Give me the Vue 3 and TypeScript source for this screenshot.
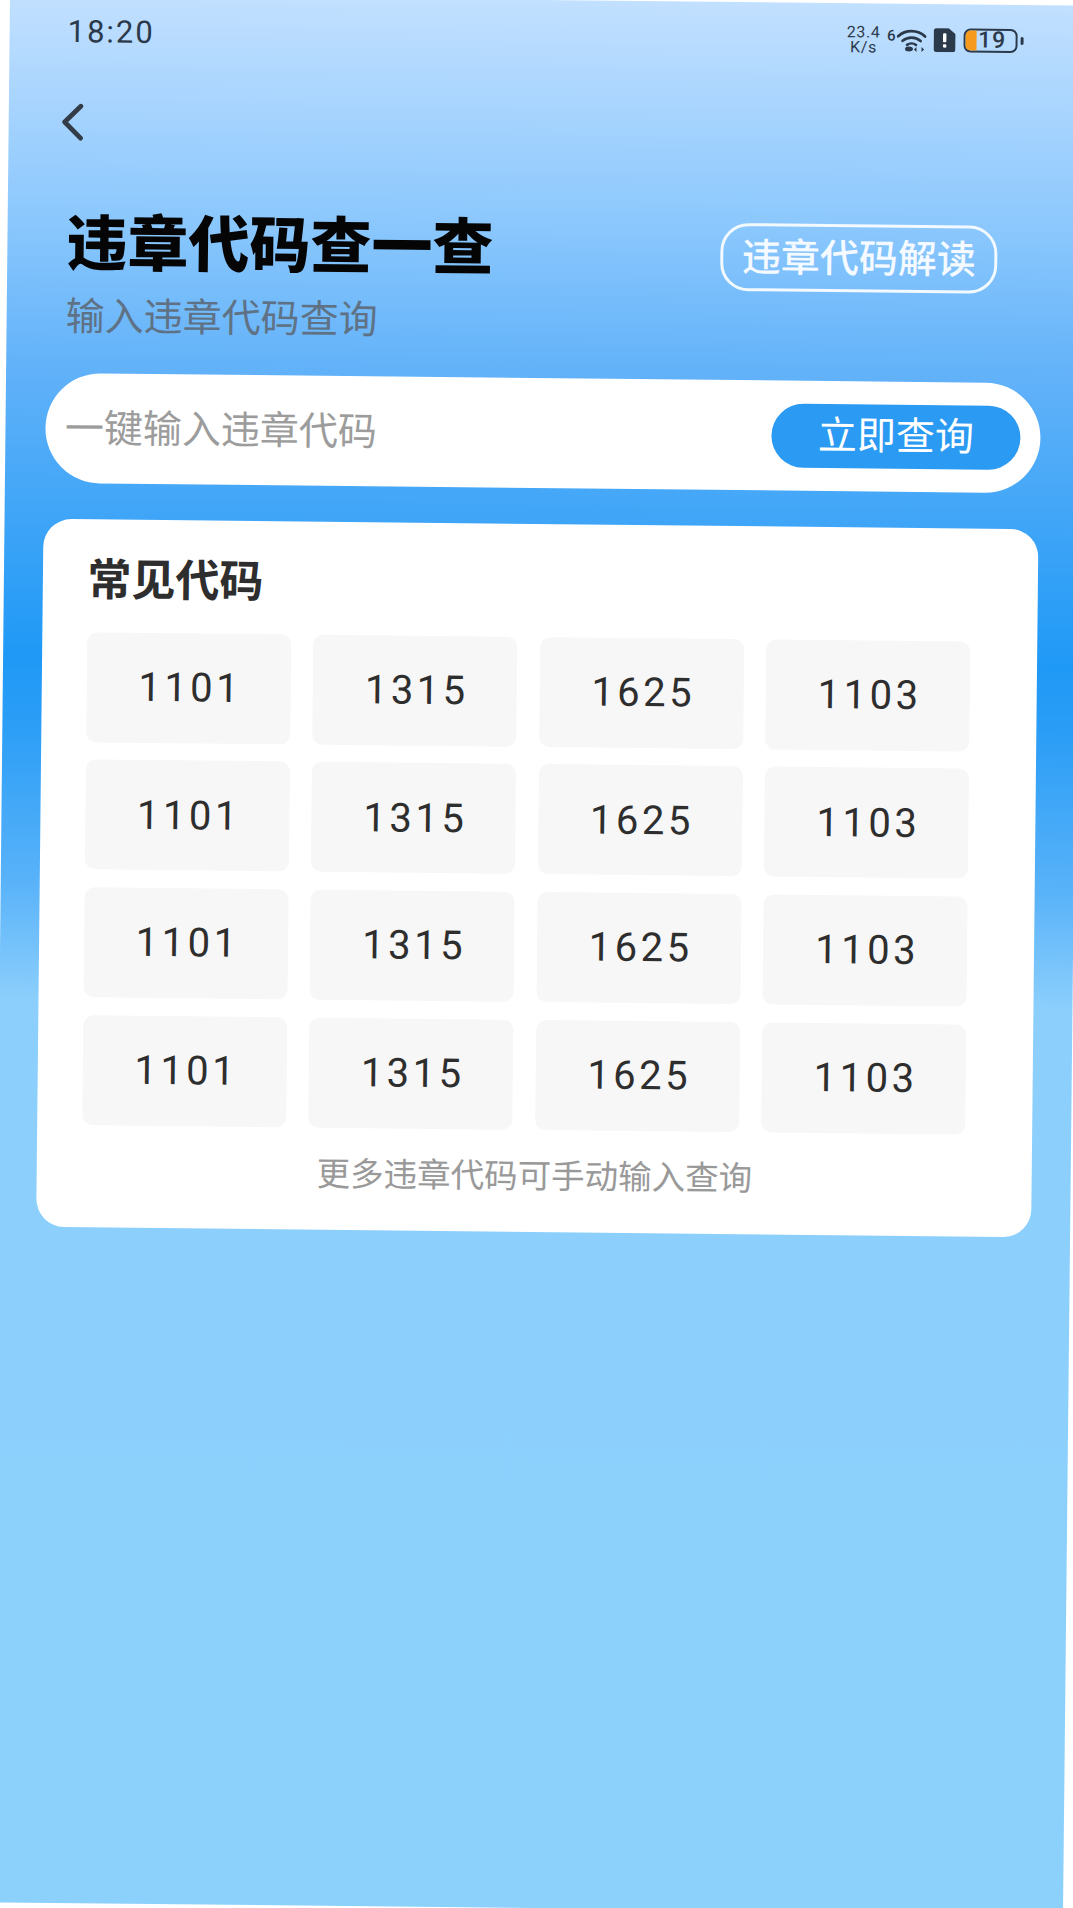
<script setup lang="ts">
const rows: string[][] = Array.from({ length: 4 }, () => ['1101', '1315', '1625', '1103'])
</script>

<template>
  <div class="page">
    <div class="status">
      <span class="time">18:20</span>
      <div class="status-right">
        <div class="speed">23.4<br />K/s</div>
        <span class="six">6</span>
        <svg class="wifi" viewBox="0 0 30 24" width="30" height="24" aria-hidden="true">
          <path d="M1.5 8.5C9 1.5 21 1.5 28.5 8.5" fill="none" stroke="#2b3a4b" stroke-width="2.8" stroke-linecap="round" />
          <path d="M6 13C11 8.6 19 8.6 24 13" fill="none" stroke="#2b3a4b" stroke-width="2.8" stroke-linecap="round" />
          <path d="M10.5 17C13 15.2 17 15.2 19.5 17" fill="none" stroke="#2b3a4b" stroke-width="2.6" stroke-linecap="round" />
          <ellipse cx="12.5" cy="21.2" rx="4" ry="2.5" fill="#2b3a4b" />
          <path d="M20 19v5l-2.6-2.5zM25 19v5l2.6-2.5z" fill="#2b3a4b" />
        </svg>
        <svg class="sim" viewBox="0 0 22 24" width="22" height="24" aria-hidden="true">
          <path d="M3 0H15L22 6V21a3 3 0 0 1-3 3H3a3 3 0 0 1-3-3V3a3 3 0 0 1 3-3z" fill="#2b3a4b" />
          <rect x="9.4" y="5" width="3.4" height="9" rx="1" fill="#fff" />
          <rect x="9.4" y="16" width="3.4" height="3.4" rx="1" fill="#fff" />
        </svg>
        <div class="battery">
          <span class="battery-fill"></span>
          <span class="battery-num">19</span>
        </div>
        <span class="nub"></span>
      </div>
    </div>

    <div class="nav">
      <svg class="back" viewBox="0 0 24 38" width="24" height="38" aria-hidden="true">
        <path d="M20 3L4 19L20 35" fill="none" stroke="#333d47" stroke-width="4.8" stroke-linecap="round" stroke-linejoin="round" />
      </svg>
    </div>

    <div class="header">
      <div class="heading">
        <h1 class="title">违章代码查一查</h1>
        <p class="subtitle">输入违章代码查询</p>
      </div>
      <button class="explain">违章代码解读</button>
    </div>

    <div class="search">
      <span class="placeholder">一键输入违章代码</span>
      <button class="query">立即查询</button>
    </div>

    <section class="card">
      <h2 class="card-title">常见代码</h2>
      <div class="grid">
        <template v-for="(row, r) in rows" :key="r">
          <div v-for="code in row" :key="code" class="tile">{{ code }}</div>
        </template>
      </div>
      <p class="more">更多违章代码可手动输入查询</p>
    </section>
  </div>
</template>

<style>
html, body {
  margin: 0;
  background: #fff;
  overflow: hidden;
}
</style>

<style scoped>
.page {
  width: 1073px;
  height: 1908px;
  box-sizing: border-box;
  transform: rotate(0.6deg);
  transform-origin: center;
  font-family: "Noto Sans CJK SC", "Noto Sans", sans-serif;
  background: linear-gradient(180deg, #c2e0ff 0, #8cc8fd 220px, #62b2f9 370px, #1f99f6 660px, #2a9df6 725px, #5ab3f9 890px, #8ccffc 1005px, #8cd0fc 100%);
  overflow: hidden;
}
.status {
  height: 72px;
  box-sizing: border-box;
  padding: 0 59px 0 58px;
  display: flex;
  align-items: center;
  justify-content: space-between;
}
.time {
  font-family: Roboto, sans-serif;
  font-size: 31px;
  letter-spacing: 2px;
  color: #2b3a4b;
}
.status-right {
  display: flex;
  align-items: center;
  color: #2b3a4b;
  font-family: Roboto, sans-serif;
}
.speed {
  width: 37px;
  text-align: center;
  font-size: 16px;
  line-height: 15px;
  letter-spacing: 0.6px;
}
.six {
  font-size: 15px;
  font-weight: 500;
  margin: -8px 1px 0 5px;
}
.wifi {
  margin-right: 7px;
}
.sim {
  margin-right: 8px;
}
.battery {
  position: relative;
  width: 54px;
  height: 24px;
  box-sizing: border-box;
  border: 2px solid #2b3a4b;
  border-radius: 7px;
  display: flex;
  align-items: center;
  justify-content: center;
}
.battery-fill {
  position: absolute;
  left: 0;
  top: 0;
  bottom: 0;
  width: 11px;
  border-radius: 5px 0 0 5px;
  background: #f59a1c;
}
.battery-num {
  position: relative;
  font-size: 23px;
  font-weight: 500;
  line-height: 20px;
  margin-left: 3px;
  letter-spacing: 1px;
}
.nub {
  width: 3px;
  height: 8px;
  border-radius: 2px;
  background: #2b3a4b;
  margin-left: 3px;
}
.nav {
  height: 110px;
  box-sizing: border-box;
  padding-left: 52px;
  display: flex;
  align-items: center;
}
.header {
  padding: 19.5px 83px 0 59px;
  display: flex;
  justify-content: space-between;
  align-items: flex-start;
}
.title {
  margin: 0;
  font-size: 61px;
  line-height: 84px;
  font-weight: 900;
  color: #050505;
}
.subtitle {
  margin: 2px 0 0;
  font-size: 39px;
  line-height: 60px;
  color: #5f7285;
}
.explain {
  margin-top: 19.5px;
  width: 277px;
  height: 68px;
  box-sizing: border-box;
  border: 3px solid #f2f9ff;
  border-radius: 28px;
  background: transparent;
  color: #f4faff;
  font-family: inherit;
  font-size: 39px;
  font-weight: 500;
  line-height: 1;
  padding: 0 0 6px;
  white-space: nowrap;
}
.search {
  margin: 30.5px 38px 0 39.5px;
  height: 110px;
  box-sizing: border-box;
  border-radius: 55px;
  background: #fff;
  padding: 0 20px;
  display: flex;
  align-items: center;
  justify-content: space-between;
}
.placeholder {
  font-size: 39px;
  color: #9c9c9c;
  padding-bottom: 7px;
}
.query {
  width: 249px;
  height: 64px;
  box-sizing: border-box;
  border: 0;
  border-radius: 32px;
  background: #2b9af2;
  color: #fff;
  font-family: inherit;
  font-size: 39px;
  line-height: 1;
  padding: 0 0 7px;
}
.card {
  margin: 36px 39px 0;
  box-sizing: border-box;
  border-radius: 28px;
  background: #fff;
  padding: 27px 67px 33px 44.5px;
}
.card-title {
  margin: 0;
  font-size: 44px;
  line-height: 60px;
  font-weight: 700;
  color: #2e2e2e;
}
.grid {
  margin-top: 25.6px;
  display: grid;
  grid-template-columns: repeat(4, 204px);
  grid-auto-rows: 110px;
  justify-content: space-between;
  row-gap: 17.7px;
}
.tile {
  border-radius: 10px;
  background: #f7f7f7;
  display: flex;
  align-items: center;
  justify-content: center;
  padding-left: 4px;
  font-family: Roboto, sans-serif;
  font-size: 40px;
  letter-spacing: 3.5px;
  color: #2e2e2e;
}
.more {
  margin: 19.4px 0 0 23px;
  text-align: center;
  font-size: 33.5px;
  line-height: 50px;
  color: #999;
}
</style>
